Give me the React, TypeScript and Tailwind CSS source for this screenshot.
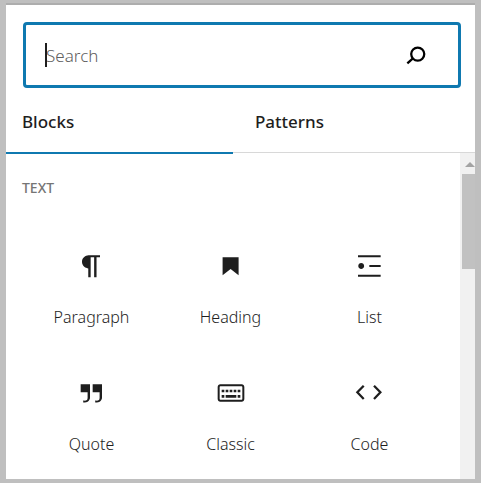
import React, { useState } from 'react';

interface BlockItem {
  name: string;
  icon: React.ReactNode;
}

const blocks: BlockItem[] = [
  {
    name: 'Paragraph',
    icon: <path d="M18 4H9.4v-.1l-.9.2c-2.3.4-4 2.4-4 4.8s1.7 4.4 4 4.8l.7.1v6.7H11V5.5h2.6v15h1.8v-15H18V4z" />,
  },
  {
    name: 'Heading',
    icon: <path d="M5.7 5.4V19l6-4.8 6 4.8V5.4h-12z" />,
  },
  {
    name: 'List',
    icon: (
      <path d="M3 4v1.5h17V4H3zm8.5 8.7H20v-1.5h-8.5v1.5zM3 20h17v-1.5H3V20zm4.6-8c0-1.2-1-2.2-2.2-2.2s-2.2 1-2.2 2.2 1 2.2 2.2 2.2 2.2-1 2.2-2.2z" />
    ),
  },
  {
    name: 'Quote',
    icon: (
      <path d="M12.5 5.5v6h5.2v4c0 .8-.2 1.4-.5 1.7-.6.6-1.6.6-2.5.5h-.3v1.5h.5c1 0 2.3-.1 3.3-1 .8-.7 1.3-1.6 1.3-2.8V5.5h-7zm-9 6h5.2v4c0 .8-.2 1.4-.5 1.7-.6.6-1.6.6-2.5.5h-.3v1.5h.5c1 0 2.3-.1 3.3-1 .8-.7 1.3-1.6 1.3-2.8V5.5h-7v6z" />
    ),
  },
  {
    name: 'Classic',
    icon: (
      <path d="M20 5.5H4c-1.1 0-2 .9-2 2v9c0 1.1.9 2 2 2h16c1.1 0 2-.9 2-2v-9c0-1.1-.9-2-2-2zm.5 11c0 .3-.2.5-.5.5H4c-.3 0-.5-.2-.5-.5v-9c0-.3.2-.5.5-.5h16c.3 0 .5.2.5.5v9zM10 9.5H8v2h2v-2zm-5 2h2v-2H5v2zm8-2h-2v2h2v-2zm-5 6h8v-2H8v2zm6-4h2v-2h-2v2zm3 0h2v-2h-2v2zm0 4h2v-2h-2v2zm-12 0h2v-2H5v2z" />
    ),
  },
  {
    name: 'Code',
    icon: <path d="M7.3 6.5l-4.8 5 4.8 5M15 6.5l4.8 5-4.8 5" fill="none" stroke="currentColor" strokeWidth="1.7" />,
  },
];

const tabs = ['Blocks', 'Patterns'];

const SearchBox: React.FC = () => {
  const [query, setQuery] = useState('');

  return (
    <div className="relative flex items-center h-[66px] ml-[17px] mr-[14px] pl-5 pr-[26px] border-3 border-[#0f79b0] rounded-sm">
      <input
        id="block-search"
        type="text"
        aria-label="Search for a block"
        placeholder="Search"
        value={query}
        onChange={(e) => setQuery(e.target.value)}
        className="flex-1 min-w-0 pt-0.5 text-[17px] font-light text-[#1e1e1e] placeholder:text-[#606060] outline-none"
      />
      {/* Text cursor */}
      {query === '' && <span className="absolute left-[19px] top-[18px] w-0.5 h-6 bg-[#1e1e1e]" />}
      <button type="button" aria-label="Search" className="text-black">
        <svg viewBox="0 0 24 24" className="w-8 h-8" fill="none" stroke="currentColor" strokeWidth="1.7">
          <circle cx="13.3" cy="11.3" r="4.9" />
          <path d="M9.7 14.6l-4.2 3.7" />
        </svg>
      </button>
    </div>
  );
};

const App: React.FC = () => {
  const [active, setActive] = useState('Blocks');

  return (
    <div className="min-h-screen flex flex-col bg-[#bfbfbf] pt-[3px] pr-1.5 pb-1 pl-1.5 font-['Noto_Sans','Open_Sans',sans-serif] text-[#1e1e1e]">
      <div className="flex-1 flex flex-col bg-white border-t-2 border-[#adadad] pt-[17px]">
        <SearchBox />

        {/* Tabs */}
        <div role="tablist" className="flex h-[65px] border-b border-[#d8d8d8]">
          {tabs.map((tab) => (
            <button
              key={tab}
              type="button"
              role="tab"
              aria-selected={active === tab}
              onClick={() => setActive(tab)}
              className={`h-[66px] pt-1 text-left text-[17px] font-medium border-b-2 first:w-[227px] first:pl-4 flex-none last:flex-1 last:pl-[22px] ${
                active === tab ? 'border-[#0f79b0]' : 'border-transparent'
              }`}
            >
              {tab}
            </button>
          ))}
        </div>

        <div className="flex-1 flex">
          <section className="flex-1 pl-4 pr-[21px] pt-[25px]">
            <h2 className="text-sm leading-5 font-medium text-[#757575]">TEXT</h2>
            <div className="grid grid-cols-3 gap-y-12 pt-13">
              {blocks.map((block) => (
                <button key={block.name} type="button" className="flex flex-col items-center gap-[23px]">
                  <svg viewBox="0 0 24 24" className="w-8 h-8 shrink-0" fill="currentColor">
                    {block.icon}
                  </svg>
                  <span className="text-base font-light">{block.name}</span>
                </button>
              ))}
            </div>
          </section>

          {/* Scrollbar */}
          <div className="w-[15px] flex flex-col items-end bg-[#f1f1f1]">
            <svg viewBox="0 0 15 21" className="w-[15px] h-[21px]" fill="#a3a3a3">
              <path d="M5 14l5-5 5 5z" />
            </svg>
            <div className="w-[13px] h-[95px] bg-[#c1c1c1]" />
          </div>
        </div>
      </div>
    </div>
  );
};

export default App;
